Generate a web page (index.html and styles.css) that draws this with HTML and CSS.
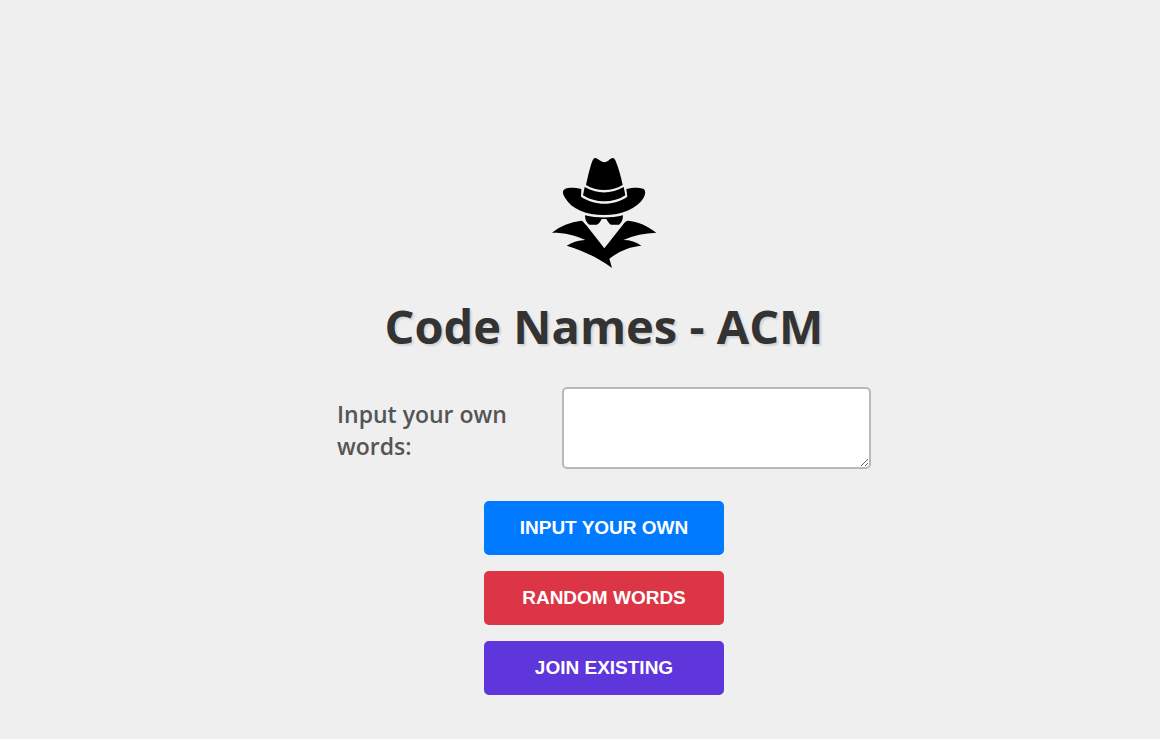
FILE: index.html
```
<!DOCTYPE html>
<html lang="en">
<head>
<meta charset="utf-8">
<title>Code Names - ACM</title>
<link rel="stylesheet" href="styles.css">
</head>
<body>
<main class="home">
  <svg class="logo" viewBox="-3 0 390 375" role="img" aria-label="Spy">
    <path d="M138 105 C144 80 150 50 158 31 Q162 22 169 25 C178 29 184 37 193 37 C202 37 208 28 215 25 Q222 22 226 31 C236 55 243 80 248 105 C215 125 170 125 138 105Z"/>
    <path d="M134 111 C170 133 216 132 251 111 L256 136 C220 160 166 160 129 136Z"/>
    <path d="M124 117 C105 113 88 112 75 117 C66 122 68 132 75 143 C95 178 140 195 192 195 C245 195 291 176 311 143 C318 129 317 120 309 116 C294 111 278 113 259 117 L262 140 C222 168 165 168 123 140Z"/>
    <path d="M135 196 C172 205 213 205 249 196 C249 206 246 218 237 224 L213 224 C207 221 203 214 199 207 L185 207 C181 216 176 223 170 224 L148 224 C139 219 135 207 135 196Z"/>
    <path d="M36 248 C60 228 91 216 124 212 C130 213 133 220 139 226 L193 295 L244 230 C251 222 255 213 264 212 C292 214 321 226 349 248 C314 249 281 256 250 270 C271 270 289 276 304 287 C269 290 238 303 208 326 L216 354 C177 325 134 304 80 287 C99 276 115 271 136 270 C108 256 75 248 36 248Z"/>
  </svg>
  <h1 class="title">Code Names - ACM</h1>
  <form class="game-form">
    <div class="field">
      <label class="field-label" for="words">Input your own words:</label>
      <textarea class="field-input" id="words"></textarea>
    </div>
    <button class="button button-blue" type="button">Input your own</button>
    <button class="button button-red" type="button">Random words</button>
    <button class="button button-purple" type="button">Join existing</button>
  </form>
</main>
</body>
</html>
```
FILE: styles.css
```
* {
  box-sizing: border-box;
}

body {
  margin: 0;
  background: #efefef;
  font-family: "Segoe UI", "Open Sans", "Noto Sans", sans-serif;
}

.home {
  display: flex;
  flex-direction: column;
  align-items: center;
  min-height: 100vh;
  padding: 150px 0 40px 48px;
}

.logo {
  width: 130px;
  height: 125px;
}

.title {
  margin: 19px 0 29px;
  color: #333;
  font-size: 47px;
  font-weight: 700;
  line-height: 64px;
  text-shadow: 2px 2px 2px rgba(0, 0, 0, 0.12);
}

.game-form {
  display: flex;
  flex-direction: column;
  align-items: center;
  gap: 16px;
  width: 100%;
}

.field {
  display: flex;
  align-items: center;
  justify-content: space-between;
  width: 100%;
  max-width: 534px;
  margin-bottom: 16px;
}

.field-label {
  width: 192px;
  padding-top: 4px;
  color: #555;
  font-size: 23px;
  font-weight: 600;
  line-height: 32px;
}

.field-input {
  width: 309px;
  height: 82px;
  padding: 8px;
  border: 2px solid #b9b9b9;
  border-radius: 5px;
  background: #fff;
  font-size: 16px;
}

.button {
  width: 240px;
  height: 54px;
  border: 0;
  border-radius: 5px;
  color: #fff;
  font-family: Arial, "Liberation Sans", sans-serif;
  font-size: 19px;
  font-weight: 700;
  text-transform: uppercase;
}

.button-blue {
  background: #007bff;
}

.button-red {
  background: #dc3545;
}

.button-purple {
  background: #5f35dc;
}
```
